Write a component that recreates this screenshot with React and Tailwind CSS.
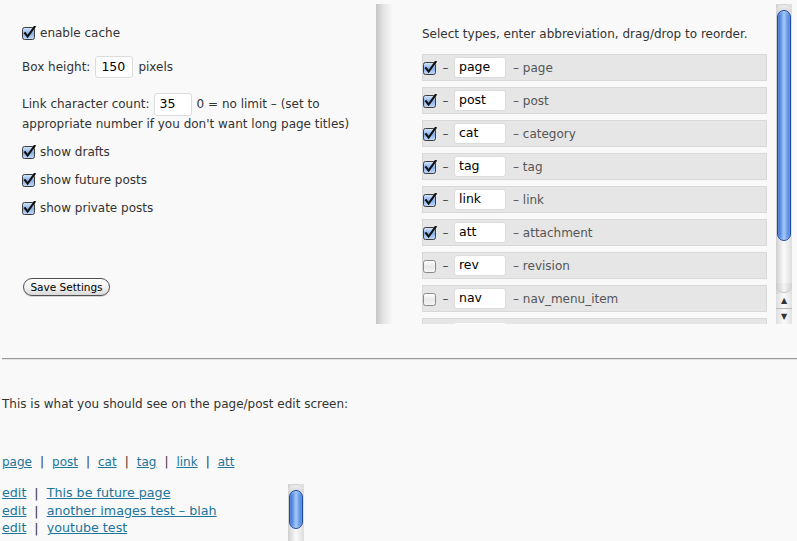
import React from "react";

const FONT = { fontFamily: '"DejaVu Sans", "Liberation Sans", sans-serif' };

function Check({ checked }) {
  if (checked) {
    return (
      <svg width="14" height="14" viewBox="0 0 14 14" className="shrink-0">
        <defs>
          <linearGradient id="cbOn" x1="0" y1="0" x2="0" y2="1">
            <stop offset="0" stopColor="#dbe8fb" />
            <stop offset="0.5" stopColor="#86b0ec" />
            <stop offset="1" stopColor="#c3daf8" />
          </linearGradient>
        </defs>
        <rect x="0.5" y="1.5" width="12" height="12" rx="2" fill="url(#cbOn)" stroke="#3d3d3d" />
        <path d="M3 7.2 L5.6 10.6 L12.6 0.8" stroke="#111" strokeWidth="2.1" fill="none" strokeLinecap="square" />
      </svg>
    );
  }
  return (
    <svg width="14" height="14" viewBox="0 0 14 14" className="shrink-0">
      <defs>
        <linearGradient id="cbOff" x1="0" y1="0" x2="0" y2="1">
          <stop offset="0" stopColor="#ffffff" />
          <stop offset="0.5" stopColor="#e9e9e9" />
          <stop offset="1" stopColor="#f6f6f6" />
        </linearGradient>
      </defs>
      <rect x="0.5" y="1.5" width="12" height="12" rx="2" fill="url(#cbOff)" stroke="#8a8a8a" />
    </svg>
  );
}

function AquaScroll({ height, thumbTop, thumbHeight, arrows }) {
  return (
    <div
      className="relative w-[16px] shrink-0 bg-linear-to-r from-[#cfcfcf] via-[#fbfbfb] to-[#dcdcdc]"
      style={{ height }}
    >
      <div className="absolute left-0 right-0 top-0 h-[8px] rounded-t-[7px] bg-linear-to-b from-[#eeeeee] to-[#d6d6d6] border-t border-[#d0d0d0]" />
      <div
        className="absolute left-[1px] right-[1px] rounded-full border border-[#1c4da3] bg-linear-to-r from-[#2c63cc] via-[#a6c9f6] to-[#3b75da] shadow-[inset_0_0_2px_rgba(255,255,255,0.6)]"
        style={{ top: thumbTop, height: thumbHeight }}
      />
      {arrows && (
        <>
          <div className="absolute left-0 right-0 bottom-[31px] h-[10px] rounded-b-full bg-linear-to-r from-[#c9c9c9] via-[#f4f4f4] to-[#d2d2d2] border-b border-[#c4c4c4]" />
          <div className="absolute left-0 right-0 bottom-0 h-[30px] flex flex-col bg-linear-to-r from-[#dddddd] via-[#fafafa] to-[#e2e2e2]">
            <div className="h-[15px] flex items-center justify-center text-[8px] leading-none text-[#333] border-b border-[#b8b8b8]">▲</div>
            <div className="h-[15px] flex items-center justify-center text-[8px] leading-none text-[#333]">▼</div>
          </div>
        </>
      )}
    </div>
  );
}

const types = [
  { on: true, abbr: "page", name: "page" },
  { on: true, abbr: "post", name: "post" },
  { on: true, abbr: "cat", name: "category" },
  { on: true, abbr: "tag", name: "tag" },
  { on: true, abbr: "link", name: "link" },
  { on: true, abbr: "att", name: "attachment" },
  { on: false, abbr: "rev", name: "revision" },
  { on: false, abbr: "nav", name: "nav_menu_item" },
  { on: false, abbr: "", name: "" },
];

function TextBox({ value, className }) {
  return (
    <div
      className={
        "flex items-center bg-white border border-[#dcdcdc] rounded-[3px] px-[4px] text-[12.5px] text-black " +
        className
      }
    >
      {value}
    </div>
  );
}

export default function App() {
  return (
    <div className="w-[797px] h-[541px] overflow-hidden bg-[#f9f9f9] text-[12px] text-[#333]" style={FONT}>
      <div className="flex h-[358px]">
        <div className="w-[376px] shrink-0 pl-[22px] pt-[23px] flex flex-col">
          <div className="flex items-center h-[20px] gap-[4px]">
            <Check checked />
            <span>enable cache</span>
          </div>
          <div className="flex items-center h-[22px] mt-[13px]">
            <span>Box height:</span>
            <TextBox value="150" className="w-[38px] h-[22px] ml-[5px] pl-[5px]" />
            <span className="ml-[5px]">pixels</span>
          </div>
          <div className="flex items-center h-[22px] mt-[15px]">
            <span>Link character count:</span>
            <TextBox value="35" className="w-[38px] h-[23px] ml-[4px] pl-[5px]" />
            <span className="ml-[5px]">0 = no limit – (set to</span>
          </div>
          <div className="leading-[18px] whitespace-nowrap">appropriate number if you don't want long page titles)</div>
          <div className="flex items-center h-[20px] gap-[4px] mt-[9px]">
            <Check checked />
            <span>show drafts</span>
          </div>
          <div className="flex items-center h-[20px] gap-[4px] mt-[8px]">
            <Check checked />
            <span>show future posts</span>
          </div>
          <div className="flex items-center h-[20px] gap-[4px] mt-[8px]">
            <Check checked />
            <span>show private posts</span>
          </div>
          <div className="mt-[60px] pl-[1px]">
            <button className="w-[87px] h-[18px] rounded-full border border-[#505050] bg-linear-to-b from-white via-[#f3f3f3] to-[#d9d9d9] text-[10.5px] text-black leading-none flex items-center justify-center shadow-[0_1px_0_rgba(0,0,0,0.15)]">
              Save Settings
            </button>
          </div>
        </div>

        <div className="mt-[4px] h-[320px] flex-1 flex mr-[5px] overflow-hidden">
          <div className="w-[16px] shrink-0 bg-linear-to-r from-[#c6c6c6] via-[#e6e6e6] to-[#f7f7f7]" />
          <div className="flex-1 pl-[30px] pr-[9px] pt-[21px] overflow-hidden">
            <div className="h-[18px] leading-[18px] whitespace-nowrap">Select types, enter abbreviation, drag/drop to reorder.</div>
            <div className="mt-[11px] flex flex-col gap-[6px]">
              {types.map((t, i) => (
                <div
                  key={i}
                  className="h-[27px] shrink-0 flex items-center border border-[#d8d8d8] bg-[#e6e6e6]"
                >
                  {t.name ? (
                    <>
                      <Check checked={t.on} />
                      <span className="w-[17px] text-center text-[#444]">–</span>
                      <TextBox value={t.abbr} className="w-[52px] h-[21px]" />
                      <span className="ml-[7px] text-[#555]">– {t.name}</span>
                    </>
                  ) : (
                    <div className="ml-[31px] w-[52px] h-[21px] bg-white rounded-[3px] mt-[4px]" />
                  )}
                </div>
              ))}
            </div>
          </div>
          <AquaScroll height={320} thumbTop={6} thumbHeight={231} arrows />
        </div>
      </div>

      <div className="ml-[2px] h-[2px] border-t border-[#9a9a9a] bg-[#e4e4e4]" />

      <div className="pl-[2px]">
        <div className="mt-[35px] leading-[18px]">This is what you should see on the page/post edit screen:</div>
        <div className="mt-[40px] leading-[18px] flex">
          {["page", "post", "cat", "tag", "link", "att"].map((l, i) => (
            <React.Fragment key={l}>
              {i > 0 && <span className="mx-[8px]">|</span>}
              <a className="text-[#21759b] underline">{l}</a>
            </React.Fragment>
          ))}
        </div>
        <div className="mt-[13px] w-[302px] flex">
          <div className="flex-1 leading-[17.7px] text-[12.7px]">
            {["This be future page", "another images test – blah", "youtube test", "links test"].map((t) => (
              <div key={t} className="flex whitespace-nowrap">
                <a className="text-[#21759b] underline">edit</a>
                <span className="mx-[8px]">|</span>
                <a className="text-[#21759b] underline">{t}</a>
              </div>
            ))}
          </div>
          <AquaScroll height={80} thumbTop={6} thumbHeight={39} />
        </div>
      </div>
    </div>
  );
}
